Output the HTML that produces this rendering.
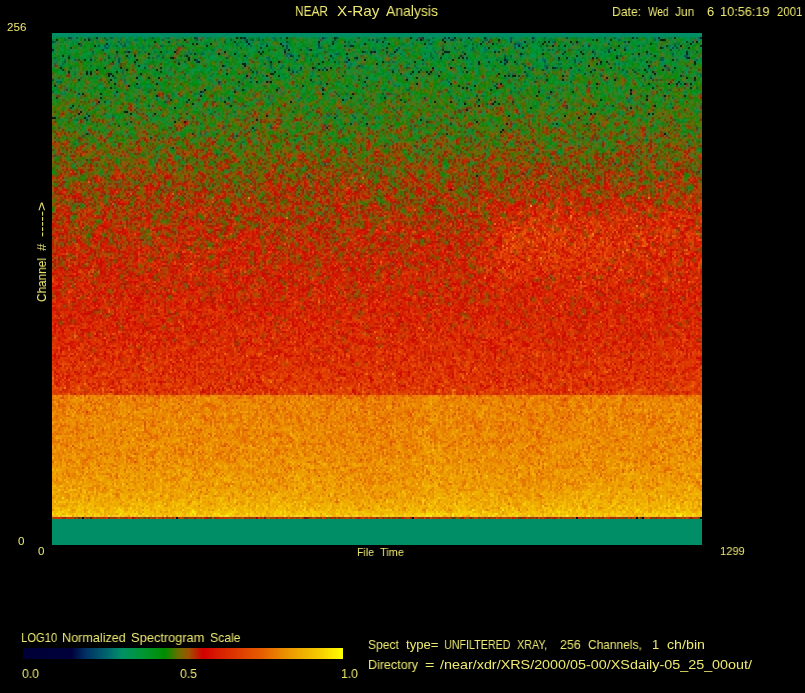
<!DOCTYPE html>
<html><head><meta charset="utf-8">
<style>
html,body{margin:0;padding:0;background:#000;}
body{width:805px;height:693px;position:relative;overflow:hidden;font-family:"Liberation Sans",sans-serif;color:rgb(236,232,112);}
.t{position:absolute;white-space:pre;line-height:1;transform-origin:0 0;will-change:transform;}
#plot{position:absolute;left:52px;top:33px;width:650px;height:512px;
background:linear-gradient(to bottom,#008e66 0,#008e66 4px,rgb(17,126,50) 8px,rgb(18,128,44) 16px,rgb(23,125,42) 24px,rgb(28,125,37) 32px,rgb(33,122,34) 40px,rgb(39,122,30) 48px,rgb(41,122,27) 56px,rgb(49,119,26) 64px,rgb(58,115,22) 72px,rgb(66,112,21) 80px,rgb(67,110,21) 88px,rgb(75,107,18) 96px,rgb(84,102,16) 104px,rgb(94,97,14) 112px,rgb(107,90,11) 120px,rgb(113,86,9) 128px,rgb(122,81,9) 136px,rgb(132,75,7) 144px,rgb(145,68,6) 152px,rgb(151,64,5) 160px,rgb(157,62,5) 168px,rgb(169,57,4) 176px,rgb(172,56,4) 184px,rgb(180,54,3) 192px,rgb(187,52,4) 200px,rgb(188,51,4) 208px,rgb(194,48,3) 216px,rgb(195,47,3) 224px,rgb(199,45,3) 232px,rgb(200,44,3) 240px,rgb(202,42,3) 248px,rgb(203,41,3) 256px,rgb(204,41,3) 264px,rgb(207,38,3) 272px,rgb(208,39,3) 280px,rgb(210,40,3) 288px,rgb(211,41,3) 296px,rgb(212,42,3) 304px,rgb(215,42,3) 312px,rgb(216,45,3) 320px,rgb(217,47,3) 328px,rgb(218,48,3) 336px,rgb(219,51,3) 344px,rgb(219,53,3) 352px,rgb(223,73,4) 360px,rgb(220,55,3) 361px,rgb(234,125,4) 361px,rgb(234,125,4) 366px,rgb(233,130,3) 374px,rgb(233,130,3) 382px,rgb(233,131,3) 390px,rgb(233,133,3) 398px,rgb(233,133,3) 406px,rgb(234,137,3) 414px,rgb(234,138,3) 422px,rgb(234,143,3) 430px,rgb(235,146,3) 438px,rgb(235,150,3) 446px,rgb(236,154,2) 454px,rgb(237,162,2) 462px,rgb(239,171,2) 470px,rgb(241,186,2) 478px,rgb(243,192,10) 484px,rgb(165,60,0) 484px,rgb(165,60,0) 486px,#008e66 486px);}
#plot canvas{position:absolute;left:0;top:0;}
#cbar{position:absolute;left:23px;top:648px;width:320px;height:11px;background:linear-gradient(to right,rgb(0,0,55) 0,rgb(0,0,60) 15%,rgb(0,50,100) 19.7%,rgb(0,100,110) 26%,rgb(0,145,100) 31%,rgb(0,150,50) 37.5%,rgb(0,140,0) 44.4%,rgb(110,110,0) 48.75%,rgb(160,80,0) 51.9%,rgb(210,0,0) 56.25%,rgb(215,30,0) 61.25%,rgb(230,90,0) 74%,rgb(235,150,0) 83%,rgb(245,205,0) 93%,rgb(255,255,0) 100%);}
</style></head><body>
<div id="plot"><canvas id="cv" width="650" height="512"></canvas></div>
<canvas id="cbar" width="320" height="11"></canvas>

<div class="t" style="left:295.18px;top:4px;font-size:14.5px;transform:scaleX(0.8179);">NEAR</div>
<div class="t" style="left:337px;top:4px;font-size:14.5px;transform:scaleX(1.055);">X-Ray</div>
<div class="t" style="left:386px;top:4px;font-size:14.5px;transform:scaleX(0.963);">Analysis</div>
<div class="t" style="left:611.86px;top:5px;font-size:13px;transform:scaleX(0.9379);">Date:</div>
<div class="t" style="left:647.8px;top:5px;font-size:13px;transform:scaleX(0.7769);">Wed</div>
<div class="t" style="left:674.9px;top:5px;font-size:13px;transform:scaleX(0.919);">Jun</div>
<div class="t" style="left:706.8px;top:5px;font-size:13px;">6</div>
<div class="t" style="left:720.02px;top:5px;font-size:13px;transform:scaleX(0.9816);">10:56:19</div>
<div class="t" style="left:777px;top:5px;font-size:13px;transform:scaleX(0.8759);">2001</div>
<div class="t" style="left:7px;top:21px;font-size:11.6px;">256</div>
<div class="t" style="left:17.5px;top:535px;font-size:11.6px;">0</div>
<div class="t" style="left:37.5px;top:545px;font-size:11.6px;">0</div>
<div class="t" style="left:356.89px;top:546px;font-size:11.6px;transform:scaleX(0.9111);">File</div>
<div class="t" style="left:379.8px;top:546px;font-size:11.6px;transform:scaleX(0.94);">Time</div>
<div class="t" style="left:720.04px;top:545px;font-size:11.6px;transform:scaleX(0.96);">1299</div>
<div class="t" style="left:20.94px;top:631px;font-size:13px;transform:scaleX(0.8634);">LOG10</div>
<div class="t" style="left:62.43px;top:631px;font-size:13px;transform:scaleX(0.9703);">Normalized</div>
<div class="t" style="left:131.01px;top:631px;font-size:13px;transform:scaleX(0.9877);">Spectrogram</div>
<div class="t" style="left:210.06px;top:631px;font-size:13px;transform:scaleX(0.9387);">Scale</div>
<div class="t" style="left:22px;top:667px;font-size:13px;transform:scaleX(0.9444);">0.0</div>
<div class="t" style="left:180px;top:667px;font-size:13px;transform:scaleX(0.9444);">0.5</div>
<div class="t" style="left:341.06px;top:667px;font-size:13px;transform:scaleX(0.9412);">1.0</div>
<div class="t" style="left:367.78px;top:638px;font-size:13px;transform:scaleX(0.9242);">Spect</div>
<div class="t" style="left:406px;top:638px;font-size:13px;transform:scaleX(1.0094);">type=</div>
<div class="t" style="left:443.67px;top:638px;font-size:13px;transform:scaleX(0.8253);">UNFILTERED</div>
<div class="t" style="left:517.1px;top:638px;font-size:13px;transform:scaleX(0.8306);">XRAY,</div>
<div class="t" style="left:560px;top:638px;font-size:13px;transform:scaleX(0.9545);">256</div>
<div class="t" style="left:588px;top:638px;font-size:13px;transform:scaleX(0.919);">Channels,</div>
<div class="t" style="left:652.25px;top:638px;font-size:13px;">1</div>
<div class="t" style="left:666.8px;top:638px;font-size:13px;transform:scaleX(1.0941);">ch/bin</div>
<div class="t" style="left:367.74px;top:658px;font-size:13px;transform:scaleX(0.9627);">Directory</div>
<div class="t" style="left:424.6px;top:658px;font-size:13px;transform:scaleX(1.2429);">=</div>
<div class="t" style="left:439.5px;top:658px;font-size:13px;transform:scaleX(1.1042);">/near/xdr/XRS/2000/05-00/XSdaily-05_25_00out/</div>
<div class="t" style="left:35px;top:301.6px;font-size:13px;transform:rotate(-90deg) scaleX(0.9083);">Channel</div>
<div class="t" style="left:35px;top:251.1px;font-size:13px;transform:rotate(-90deg) scaleX(1.0143);">#</div>
<div class="t" style="left:35px;top:236.8px;font-size:13px;transform:rotate(-90deg) scaleX(1.2);">-----&gt;</div>

<script>
(function(){
var CM=[[0,0,0,55],[0.15,0,0,60],[0.197,0,50,100],[0.26,0,100,110],[0.31,0,145,100],[0.375,0,150,50],[0.444,0,140,0],[0.4875,110,110,0],[0.519,160,80,0],[0.5625,210,0,0],[0.6125,215,30,0],[0.74,230,90,0],[0.83,235,150,0],[0.93,245,205,0],[1,255,255,0]];
function cmap(v){if(v<=0)return CM[0].slice(1);if(v>=1)return CM[CM.length-1].slice(1);
for(var i=1;i<CM.length;i++){if(v<=CM[i][0]){var a=CM[i-1],b=CM[i],f=(v-a[0])/(b[0]-a[0]);return [a[1]+(b[1]-a[1])*f,a[2]+(b[2]-a[2])*f,a[3]+(b[3]-a[3])*f];}}}
// colorbar
var cb=document.getElementById('cbar'),cx=cb.getContext('2d'),id=cx.createImageData(320,11);
for(var x=0;x<320;x++){var c=cmap(x/319);for(var y=0;y<11;y++){var k=(y*320+x)*4;id.data[k]=c[0];id.data[k+1]=c[1];id.data[k+2]=c[2];id.data[k+3]=255;}}
cx.putImageData(id,0,0);
// PRNG
var s=123456789;function rnd(){s^=s<<13;s^=s>>>17;s^=s<<5;return ((s>>>0)%1000000)/1000000;}
function gauss(){var u=rnd()||1e-6,v=rnd();return Math.sqrt(-2*Math.log(u))*Math.cos(6.2831853*v);}
var MU=[[14,0.93],[15,0.915],[18,0.885],[23,0.862],[30,0.842],[45,0.818],[74,0.802],[75,0.672],[90,0.65],[110,0.627],[130,0.603],[150,0.58],[165,0.558],[178,0.535],[190,0.51],[200,0.487],[215,0.455],[235,0.42],[253,0.38]];
function interp(T,c){if(c<=T[0][0])return T[0][1];for(var i=1;i<T.length;i++){if(c<=T[i][0]){var a=T[i-1],b=T[i];return a[1]+(b[1]-a[1])*(c-a[0])/(b[0]-a[0]);}}return T[T.length-1][1];}
var CR=2,LB=0.15,CM2=0.8,UP=0.8,DN=1.05;var W=650,H=512,cv=document.getElementById('cv'),g=cv.getContext('2d'),im=g.createImageData(W,H),d=im.data;
var R=new Float32Array(W*H),G=new Float32Array(W*H),B=new Float32Array(W*H),prev=new Float32Array(325);
for(var ch=0;ch<256;ch++){
  var y0=H-2*(ch+1);var mu0=interp(MU,ch);var p0=ch>200?(ch-200)/53*0.035:0;
  var sg=ch<75?0.036:(ch<120?0.052:(ch<170?0.058+(ch-120)*0.0004:0.078+(ch-170)*0.0001));
  for(var col=0;col<325;col++){
    var v,c,X=col*2+52,Y=y0+33;
    var n=0.12*prev[col]+0.993*gauss();prev[col]=n;
    var sx=Math.min(1,Math.max(0,(X-(475+(235-Y)*0.25))/40));var by=(Y-238)/42;var mu=mu0+0.09*sx*Math.exp(-by*by)*(1-0.35*Math.max(0,(X-520)/180));
    if(ch>=14&&ch<75){var e1=(X-375)/45,e2=(X-530)/30,e3=(X-432)/12;mu+=-0.012*Math.exp(-e1*e1)-0.01*Math.exp(-e2*e2)+0.012*Math.exp(-e3*e3);}
    if(ch<=12||ch>=254){c=[0,142,102];}
    else if(ch==13){c=[150+40*gauss(),50+20*gauss(),0];if(rnd()<0.03)c=[40,10,0];}
    else{ if(rnd()<p0){v=-1;}else{v=mu+sg*(n>0?n*UP:n*DN); if(ch>100&&ch<215&&rnd()<0.04)v-=0.08;} c=(v<0)?[0,15,55]:cmap(v);}
    for(var dy=0;dy<2;dy++)for(var dx=0;dx<2;dx++){var k=(y0+dy)*W+col*2+dx;R[k]=c[0];G[k]=c[1];B[k]=c[2];}
  }
}
var Yl=new Float32Array(W*H),Cb=new Float32Array(W*H),Cr=new Float32Array(W*H);
for(var i=0;i<W*H;i++){var r=R[i],gg=G[i],bb=B[i];Yl[i]=0.299*r+0.587*gg+0.114*bb;Cb[i]=-0.1687*r-0.3313*gg+0.5*bb;Cr[i]=0.5*r-0.4187*gg-0.0813*bb;}
function blur(A,rad){var T=new Float32Array(W*H);for(var y=0;y<H;y++)for(var x=0;x<W;x++){var s2=0,n2=0;for(var k=-rad;k<=rad;k++){var xx=x+k;if(xx>=0&&xx<W){s2+=A[y*W+xx];n2++;}}T[y*W+x]=s2/n2;}
 for(var y=0;y<H;y++)for(var x=0;x<W;x++){var s2=0,n2=0;for(var k=-rad;k<=rad;k++){var yy=y+k;if(yy>=0&&yy<H){s2+=T[yy*W+x];n2++;}}A[y*W+x]=s2/n2;}}
var Cb0=new Float32Array(Cb),Cr0=new Float32Array(Cr);blur(Cb,CR);blur(Cr,CR);for(var i=0;i<W*H;i++){Cb[i]=Cb[i]*CM2+Cb0[i]*(1-CM2);Cr[i]=Cr[i]*CM2+Cr0[i]*(1-CM2);}
if(LB>0){var Y2=new Float32Array(Yl);blur(Y2,1);for(var i=0;i<W*H;i++)Yl[i]=Yl[i]*(1-LB)+Y2[i]*LB;}
for(var i=0;i<W*H;i++){var k=i*4,y=Yl[i];d[k]=y+1.402*Cr[i];d[k+1]=y-0.34414*Cb[i]-0.71414*Cr[i];d[k+2]=y+1.772*Cb[i];d[k+3]=255;}
for(var x=0;x<W;x++){for(var y=H-26;y<H;y++){var k=(y*W+x)*4;d[k]=0;d[k+1]=142;d[k+2]=102;}
 for(var y=0;y<4;y++){var k=(y*W+x)*4;d[k]=0;d[k+1]=142;d[k+2]=102;}}
for(var col=0;col<325;col++){var c=[165+25*gauss(),60+15*gauss(),0];if(rnd()<0.03)c=[20,5,0];
 for(var dy=0;dy<2;dy++)for(var dx=0;dx<2;dx++){var k=((H-28+dy)*W+col*2+dx)*4;d[k]=c[0];d[k+1]=c[1];d[k+2]=c[2];}}
g.putImageData(im,0,0);
})();
</script>
</body></html>
